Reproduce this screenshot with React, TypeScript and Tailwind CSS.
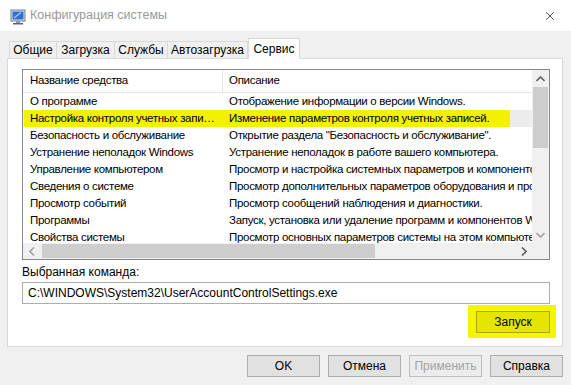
import { X } from "lucide-react";

const FONT = "font-['Liberation_Sans','DejaVu_Sans',sans-serif]";

const ROWS: [string, string][] = [
  ["О программе", "Отображение информации о версии Windows."],
  ["Настройка контроля учетных запи…", "Изменение параметров контроля учетных записей."],
  ["Безопасность и обслуживание", "Открытие раздела \"Безопасность и обслуживание\"."],
  ["Устранение неполадок Windows", "Устранение неполадок в работе вашего компьютера."],
  ["Управление компьютером", "Просмотр и настройка системных параметров и компонентов Windows."],
  ["Сведения о системе", "Просмотр дополнительных параметров оборудования и программного обеспечения."],
  ["Просмотр событий", "Просмотр сообщений наблюдения и диагностики."],
  ["Программы", "Запуск, установка или удаление программ и компонентов Windows."],
  ["Свойства системы", "Просмотр основных параметров системы на этом компьютере."],
];

const TABS: [string, string][] = [
  ["Общие", "w-[48px]"],
  ["Загрузка", "w-[59px]"],
  ["Службы", "w-[54px]"],
  ["Автозагрузка", "w-[81px]"],
];

function AppIcon() {
  return (
    <svg width="16" height="16" viewBox="0 0 16 16">
      <rect x="1" y="1" width="14" height="11" fill="#dfe6ef" stroke="#6b7f99" />
      <rect x="2.5" y="2.5" width="11" height="8" fill="#2f6fd0" />
      <path d="M4 9 L11 3.5" stroke="#9fd0ff" strokeWidth="1.2" />
      <rect x="6" y="12" width="4" height="2" fill="#8a96a8" />
      <rect x="3" y="14" width="10" height="1.5" fill="#5a6678" />
    </svg>
  );
}

function Button({
  label,
  disabled,
  className = "",
}: {
  label: string;
  disabled?: boolean;
  className?: string;
}) {
  return (
    <div
      className={`w-[73px] h-[22px] flex items-center justify-center border text-[12px] ${
        disabled
          ? "bg-[#ececec] border-[#bfbfbf] text-[#a3a3a3]"
          : "bg-[#e1e1e1] border-[#adadad] text-black"
      } ${className}`}
    >
      {label}
    </div>
  );
}

export default function App() {
  return (
    <div className={`w-[571px] h-[385px] bg-[#f0f0f0] flex flex-col overflow-hidden ${FONT}`}>
      {/* title bar */}
      <div className="h-[31px] bg-white flex items-center shrink-0">
        <div className="ml-[10px] mt-[2px]">
          <AppIcon />
        </div>
        <span className="ml-[4px] text-[12.5px] text-[#999999]">Конфигурация системы</span>
        <X size={14} strokeWidth={1.2} className="ml-auto mr-[14px] text-black" />
      </div>

      {/* tabs */}
      <div className="flex items-end pl-[9px] h-[27px] shrink-0 text-[12px]">
        {TABS.map(([t, w]) => (
          <div
            key={t}
            className={`${w} h-[17px] -mr-px border border-b-0 border-[#d9d9d9] bg-[#f0f0f0] flex items-center justify-center`}
          >
            {t}
          </div>
        ))}
        <div className="w-[52px] h-[21px] ml-px mb-[-1px] border border-b-0 border-[#d9d9d9] bg-white flex items-center justify-center relative z-10">
          Сервис
        </div>
      </div>

      {/* panel */}
      <div className="ml-[7px] w-[556px] h-[289px] border border-[#d9d9d9] bg-white flex flex-col shrink-0">
        <div className="ml-[14px] mt-[10px] w-[528px] h-[191px] border border-[#828790] flex flex-col text-[11.5px] tracking-[-0.3px]">
          <div className="flex h-[173px]">
            <div className="w-[509px] flex flex-col overflow-hidden">
              {/* header */}
              <div className="h-[23px] flex border-b border-[#e5e5e5] shrink-0">
                <div className="w-[200px] pl-[7px] flex items-center border-r border-[#e5e5e5] shrink-0">
                  Название средства
                </div>
                <div className="pl-[6px] flex items-center">Описание</div>
              </div>
              {ROWS.map(([name, desc], i) => (
                <div
                  key={name}
                  className={`h-[17px] flex shrink-0 whitespace-nowrap ${
                    i === 1 ? "bg-[#ececec]" : ""
                  }`}
                >
                  <div className={`flex shrink-0 ${i === 1 ? "bg-[#f2f200] w-[486px] ml-px" : ""}`}>
                    <div
                      className={`${i === 1 ? "w-[199px] pl-[6px]" : "w-[200px] pl-[7px]"} shrink-0 truncate leading-[17px]`}
                    >
                      {name}
                    </div>
                    <div className="pl-[6px] leading-[17px] shrink-0">{desc}</div>
                  </div>
                </div>
              ))}
            </div>
            {/* vertical scrollbar */}
            <div className="w-[17px] bg-[#f0f0f0] flex flex-col items-center shrink-0">
              <div className="h-[17px] w-full flex items-center justify-center">
                <svg width="9" height="6" viewBox="0 0 9 6">
                  <path d="M0.5 5 L4.5 1 L8.5 5" stroke="#606060" strokeWidth="1.6" fill="none" />
                </svg>
              </div>
              <div className="w-[15px] h-[61px] bg-[#cdcdcd]" />
              <div className="flex-1" />
              <div className="h-[17px] w-full flex items-center justify-center">
                <svg width="9" height="6" viewBox="0 0 9 6">
                  <path d="M0.5 1 L4.5 5 L8.5 1" stroke="#a3a3a3" strokeWidth="1.6" fill="none" />
                </svg>
              </div>
            </div>
          </div>
          {/* horizontal scrollbar */}
          <div className="flex h-[16px] shrink-0">
            <div className="w-[509px] bg-[#f0f0f0] flex items-center">
              <div className="w-[17px] h-full flex items-center justify-center">
                <svg width="6" height="9" viewBox="0 0 6 9">
                  <path d="M5 0.5 L1 4.5 L5 8.5" stroke="#a3a3a3" strokeWidth="1.6" fill="none" />
                </svg>
              </div>
              <div className="w-[333px] h-[14px] bg-[#cdcdcd] ml-[2px]" />
              <div className="flex-1" />
              <div className="w-[17px] h-full flex items-center justify-center">
                <svg width="6" height="9" viewBox="0 0 6 9">
                  <path d="M1 0.5 L5 4.5 L1 8.5" stroke="#606060" strokeWidth="1.6" fill="none" />
                </svg>
              </div>
            </div>
            <div className="w-[17px] bg-[#f0f0f0]" />
          </div>
        </div>

        <div className="ml-[14px] mt-[4px] text-[12px] leading-[16px]">Выбранная команда:</div>
        <div className="ml-[14px] mt-[2px] w-[528px] h-[22px] border border-[#adadad] bg-white flex items-center pl-[5px] text-[12px]">
          C:\WINDOWS\System32\UserAccountControlSettings.exe
        </div>
        <div className="flex justify-end mr-[6px] mt-[1px]">
          <div className="bg-[#f5f500] pl-[8px] pr-[6px] pt-[6px] pb-[5px]">
            <Button label="Запуск" className="!w-[74px] !bg-[#e5e500] !border-[#a8a800]" />
          </div>
        </div>
      </div>

      {/* bottom buttons */}
      <div className="flex justify-end gap-[8px] pr-[8px] mt-[8px] h-[22px]">
        <Button label="OK" />
        <Button label="Отмена" />
        <Button label="Применить" disabled />
        <Button label="Справка" />
      </div>
    </div>
  );
}
